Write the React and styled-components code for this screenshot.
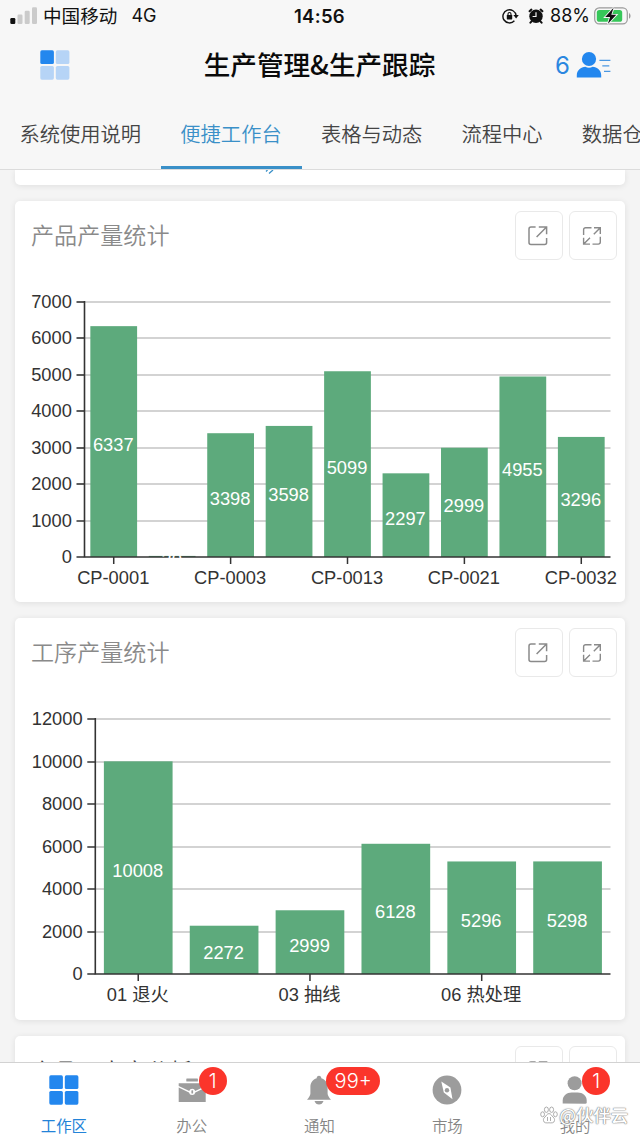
import styled, { createGlobalStyle } from "styled-components";

const GlobalStyle = createGlobalStyle`
    * {
        box-sizing: border-box;
    }
    body {
        margin: 0;
        background: #f4f4f4;
        font-family: "Inter", "Noto Sans CJK SC", sans-serif;
    }
`;

// ===== Layout =====
const Screen = styled.div`
    width: 640px;
    height: 1138px;
    display: flex;
    flex-direction: column;
    overflow: hidden;
    position: relative;
    background: #f4f4f4;
`;

const StatusBar = styled.div`
    height: 32px;
    flex: none;
    display: grid;
    grid-template-columns: 1fr auto 1fr;
    align-items: center;
    padding: 0 8px 0 10px;
    background: #f7f7f7;
    color: #111;
    font-size: 18px;
    line-height: 32px;
`;

const StatusLeft = styled.div`
    display: flex;
    align-items: center;
    font-family: "Inter", "Noto Sans CJK SC", sans-serif;
`;

const Carrier = styled.span`
    margin: 0 14px 0 6px;
    font-size: 18.6px;
`;

const Clock = styled.div`
    margin-right: 3px;
    font-weight: 600;
    font-size: 18.5px;
    letter-spacing: 0.3px;
`;

const StatusRight = styled.div`
    display: flex;
    align-items: center;
    justify-content: flex-end;
`;

const BatteryLevel = styled.span`
    margin: 0 4px 0 6px;
`;

const Header = styled.header`
    height: 66px;
    flex: none;
    display: grid;
    grid-template-columns: 1fr auto 1fr;
    align-items: center;
    padding: 0 29px 0 40px;
    background: #f7f7f7;
`;

const Title = styled.h1`
    margin: -2px 12px 0 0;
    font-family: "Noto Sans CJK SC", sans-serif;
    font-size: 26.6px;
    font-weight: 500;
    line-height: 64px;
    color: #0a0a0a;
    white-space: nowrap;
`;

const Members = styled.div`
    display: flex;
    align-items: center;
    justify-content: flex-end;
    gap: 6px;
    color: #2b87e0;
    font-size: 24px;
`;

const Tabs = styled.nav`
    height: 72px;
    flex: none;
    display: flex;
    background: #f7f7f7;
    border-bottom: 1px solid #dcdcdc;
`;

const Tab = styled.div`
    flex: none;
    height: 71px;
    padding: 0 19.8px 0 19.4px;
    font-family: "Noto Sans CJK SC", sans-serif;
    font-size: 20.3px;
    font-weight: 350;
    line-height: 71px;
    color: ${(p) => (p.$active ? "#3a90c8" : "#444")};
    border-bottom: 3px solid ${(p) => (p.$active ? "#3a90c8" : "transparent")};
`;

const Content = styled.main`
    flex: 1;
    min-height: 0;
    overflow: hidden;
    display: flex;
    flex-direction: column;
    gap: 16px;
    padding: 0 15.5px 0 15px;
`;

const Card = styled.section`
    flex: none;
    height: ${(p) => p.$height}px;
    background: #fff;
    border-radius: ${(p) => (p.$cut ? "0 0 5px 5px" : "5px")};
    box-shadow: 0 1px 6px rgba(0, 0, 0, 0.09);
    overflow: hidden;
`;

const CutMark = styled.svg`
    display: block;
    margin-left: 250px;
`;

const CardHeader = styled.div`
    height: 80px;
    display: flex;
    align-items: flex-start;
    gap: 6px;
    padding: 10px 8px 0 16px;
`;

const CardTitle = styled.h2`
    flex: 1;
    margin: 0;
    font-family: "Noto Sans CJK SC", sans-serif;
    font-size: 23.1px;
    font-weight: 350;
    line-height: ${(p) => (p.$dark ? 49 : 47)}px;
    color: ${(p) => (p.$dark ? "#444" : "#8a8a8a")};
`;

const ToolButton = styled.button`
    width: 48px;
    height: 49px;
    padding: 0 2px 0 0;
    display: grid;
    place-items: center;
    background: #fff;
    border: 1.5px solid #e9e9e9;
    border-radius: 6px;
`;

const Chart = styled.svg`
    display: block;
    font-family: "Liberation Sans", "Noto Sans CJK SC", sans-serif;
    font-size: 18.3px;
`;

const BottomNav = styled.nav`
    height: 76px;
    flex: none;
    display: grid;
    grid-template-columns: repeat(5, 127.8px);
    background: #fff;
    border-top: 1px solid #d2d2d2;
`;

const NavItem = styled.div`
    position: relative;
    display: flex;
    flex-direction: column;
    align-items: center;
    padding-top: 12px;
    color: ${(p) => (p.$active ? "#2383d8" : "#858585")};
    font-family: "Noto Sans CJK SC", sans-serif;
    font-size: 15.4px;
    font-weight: ${(p) => (p.$active ? 400 : 350)};
    line-height: 22px;

    svg {
        display: block;
        margin-bottom: 9px;
    }
`;

const Badge = styled.span`
    position: absolute;
    top: 4px;
    left: ${(p) => p.$left}px;
    min-width: 28px;
    height: 28px;
    padding: 0 8.5px;
    border-radius: 14px;
    background: #fb352b;
    color: #fff;
    font-family: "Inter", sans-serif;
    font-size: 20px;
    font-weight: 300;
    line-height: 28px;
    text-align: center;
`;

const Watermark = styled.div`
    position: absolute;
    right: 12px;
    bottom: 11px;
    display: flex;
    align-items: center;
    gap: 1px;
    color: #fff;
    font-family: "Noto Sans CJK SC", sans-serif;
    font-size: 17.3px;
    font-weight: 500;
    line-height: 24px;
    text-shadow: 0 0 1px #777, 0 0 1px #888, 0 0 2px #aaa;

    svg {
        margin-left: -1px;
    }
`;

// ===== Icons =====
const GridIcon = ({ size = 30, faded }) => (
    <svg width={size} height={size} viewBox="0 0 30 30" fill="#2387ee">
        <rect x="0.3" y="0.3" width="13.6" height="13.8" rx="1.6" />
        <g fill={faded ? "#b6d4f6" : "#2387ee"}>
            <rect x="15.8" y="0.3" width="13.6" height="13.8" rx="1.6" />
            <rect x="0.3" y="15.9" width="13.6" height="13.8" rx="1.6" />
            <rect x="15.8" y="15.9" width="13.6" height="13.8" rx="1.6" />
        </g>
    </svg>
);

const SignalIcon = () => (
    <svg width="27" height="18" viewBox="0 0 27 18" fill="#cbcbcb">
        <rect x="0.3" y="11" width="5" height="6" rx="1.2" fill="#111" />
        <rect x="7.5" y="7.5" width="5" height="9.5" rx="1.2" />
        <rect x="14.7" y="3.8" width="5" height="13.2" rx="1.2" />
        <rect x="22" y="0.3" width="5" height="16.7" rx="1.2" />
    </svg>
);

const LockIcon = () => (
    <svg width="17" height="16" viewBox="0 0 17 16">
        <path d="M12.4 12.8A6.6 6.6 0 1 1 14.1 7.6" fill="none" stroke="#111" strokeWidth="1.4" />
        <path d="M11.4 7h5.4l-2.7 3.5z" fill="#111" />
        <rect x="4.8" y="7" width="5.4" height="4.4" rx="0.6" fill="#111" />
        <path d="M6 7.2V6a1.5 1.5 0 0 1 3 0v1.2" fill="none" stroke="#111" strokeWidth="1.1" />
    </svg>
);

const AlarmIcon = styled(({ className }) => (
    <svg className={className} width="16" height="16" viewBox="0 0 16 16" fill="#111">
        <circle cx="8" cy="8.2" r="6.7" />
        <path
            d="M1.6 3.3 3.4 1.6M14.4 3.3 12.6 1.6M3.6 13.3 2.4 14.7M12.4 13.3 13.6 14.7"
            stroke="#111"
            strokeWidth="2"
            strokeLinecap="round"
        />
        <path d="M8 4.2v4.3H4.6" fill="none" stroke="#f7f7f7" strokeWidth="1.2" />
    </svg>
))`
    margin-left: 9px;
`;

const BatteryIcon = () => (
    <svg width="38" height="18" viewBox="0 0 38 18">
        <rect x="0.7" y="0.9" width="32.6" height="16" rx="4.6" fill="none" stroke="#9a9a9a" strokeWidth="1.2" />
        <rect x="2.8" y="3" width="25.4" height="11.8" rx="2.6" fill="#36c759" />
        <path d="M35 6v5.8c2-.9 2-4.9 0-5.8z" fill="#9a9a9a" />
        <path
            d="M19.6.8 11.2 10h4.9L13.8 17l8.5-9.2h-5z"
            fill="#111"
            stroke="#f7f7f7"
            strokeWidth="1.8"
            paintOrder="stroke"
        />
    </svg>
);

const MemberIcon = () => (
    <svg width="35" height="28" viewBox="0 0 35 28">
        <circle cx="13" cy="8" r="7.1" fill="#2387ee" />
        <path d="M0.8 26.4v-2.2c0-4.7 4.2-8.4 8.6-8.4 2 1.4 5.2 1.4 7.2 0 4.5 0 8.6 3.7 8.6 8.4v2.2z" fill="#2387ee" />
        <path d="M23.4 9.3h11M26.3 14.8h7M28 20.3h6.4" stroke="#4b98e2" strokeWidth="1.3" />
    </svg>
);

const OpenIcon = () => (
    <svg width="22" height="22" viewBox="0 0 22 22" fill="none" stroke="#8a8a8a" strokeWidth="1.5">
        <path d="M8.6 2H4a2 2 0 0 0-2 2v13.6a2 2 0 0 0 2 2h13.6a2 2 0 0 0 2-2V13M11.8 2h7.8v7.2M19.3 2.3 9.6 12" />
    </svg>
);

const ExpandIcon = () => (
    <svg width="20" height="20" viewBox="0 0 20 20" fill="none" stroke="#8a8a8a" strokeWidth="1.4">
        <path d="M9.5 1.7H3.6a2 2 0 0 0-2 2V9M12 1.7h6.3V8M18 2l-6.2 6.2M18.3 10.8v5.3a2 2 0 0 1-2 2h-5.8M8 18.1H1.6v-6.3M2 17.8l6-6" />
    </svg>
);

const BriefcaseIcon = () => (
    <svg width="30" height="30" viewBox="0 0 30 30" fill="#9c9c9c">
        <rect x="9.3" y="3.4" width="11.6" height="3" rx="0.5" />
        <path d="M1.7 8.3h27v2.6l-10.5 5a3.2 3.2 0 0 0-6 0L1.7 10.9z" />
        <path d="M1.7 12.6 12 17.4a3.2 3.2 0 0 0 6.3 0l10.4-4.8V27h-27z" />
        <rect x="14.4" y="15.2" width="1.7" height="3.4" rx="0.6" />
    </svg>
);

const BellIcon = () => (
    <svg width="30" height="30" viewBox="0 0 30 30" fill="#9c9c9c">
        <path d="M15 0.8c1.5 0 2.3 1 2.3 2.4 4 1.1 6.3 4.6 6.3 8.8v6.4c0 2.2 1.6 4 3.4 6.4H3c1.8-2.4 3.4-4.2 3.4-6.4V12c0-4.2 2.3-7.7 6.3-8.8C12.7 1.8 13.5.8 15 .8z" />
        <path d="M10.5 26h9c-.8 2.4-2.4 3.6-4.5 3.6s-3.7-1.2-4.5-3.6z" />
    </svg>
);

const CompassIcon = () => (
    <svg width="30" height="30" viewBox="0 0 30 30">
        <circle cx="15" cy="15" r="14.4" fill="#9c9c9c" />
        <path d="M9.3 6.5 18.4 12.6 20.5 24.3 11.8 17.5z" fill="#fff" />
        <circle cx="15" cy="15.2" r="2.2" fill="#9c9c9c" />
    </svg>
);

const MineIcon = () => (
    <svg width="30" height="30" viewBox="0 0 30 30" fill="#9c9c9c">
        <circle cx="14.6" cy="8.3" r="7" />
        <path d="M2.7 28.5v-3c0-4.7 4-8 9-8h6c5 0 9 3.3 9 8v1.8a1.5 1.5 0 0 1-1.5 1.5z" />
    </svg>
);

const PawIcon = () => (
    <svg width="18" height="18" viewBox="0 0 18 18" fill="#fff" stroke="#999" strokeWidth="0.8">
        <ellipse cx="6.4" cy="3.7" rx="2" ry="2.7" />
        <ellipse cx="11.6" cy="3.7" rx="2" ry="2.7" />
        <ellipse cx="2.6" cy="8.3" rx="1.9" ry="2.5" />
        <ellipse cx="15.4" cy="8.3" rx="1.9" ry="2.5" />
        <path d="M9 7.6c2 0 2.5 2 4 3.4s1.7 2 1.5 3.6c-.3 2.6-3 2.4-5.5 2.2-2.5.2-5.2.4-5.5-2.2-.2-1.600 0-2.200 1.500-3.600S7 7.600 9 7.600z" />
        <path d="M7.5 11v4M10.5 11v4" />
    </svg>
);

// ===== Charts =====
const TOP = 21;
const BOTTOM = 276;
const RIGHT = 595.5;

function BarChart({ data, max, step, left }) {
    const slot = (RIGHT - left) / data.length;
    const y = (v) => BOTTOM - (v / max) * (BOTTOM - TOP);
    const ticks = [];
    for (let v = 0; v <= max; v += step) ticks.push(v);

    return (
        <Chart width="609" height="321" viewBox="0 0 609 321">
            {ticks.map((v) => {
                const ty = Math.round(y(v));
                return (
                    <g key={v}>
                        {v > 0 && (
                            <line x1={left} x2={RIGHT} y1={ty} y2={ty} stroke="#c4c4c4" strokeWidth="1.5" />
                        )}
                        <line x1={left - 8} x2={left} y1={ty} y2={ty} stroke="#333" strokeWidth="1.6" />
                        <text x={left - 12.7} y={ty + 6.3} textAnchor="end" fill="#333">
                            {v}
                        </text>
                    </g>
                );
            })}
            {data.map((d, i) => (
                <rect
                    key={i}
                    x={left + slot * (i + 0.1)}
                    y={y(d.value)}
                    width={slot * 0.8}
                    height={BOTTOM - y(d.value)}
                    fill="#5daa7c"
                />
            ))}
            <line x1={left} x2={left} y1={TOP - 1} y2={BOTTOM + 0.5} stroke="#333" strokeWidth="1.6" />
            <line x1={left} x2={RIGHT} y1={BOTTOM} y2={BOTTOM} stroke="#333" strokeWidth="1.6" />
            {data.map((d, i) => {
                const cx = left + slot * (i + 0.5);
                return (
                    <g key={i} textAnchor="middle">
                        {d.label && (
                            <>
                                <line x1={cx} x2={cx} y1={BOTTOM} y2={BOTTOM + 7} stroke="#333" strokeWidth="1.5" />
                                <text x={cx - 0.5} y={BOTTOM + 27.4} fill="#333">
                                    {d.label}
                                </text>
                            </>
                        )}
                        <text x={cx - 0.5} y={(y(d.value) + BOTTOM) / 2 + 9.4} fill="#fff">
                            {d.value}
                        </text>
                    </g>
                );
            })}
        </Chart>
    );
}

const products = [
    { label: "CP-0001", value: 6337 },
    { value: 30 },
    { label: "CP-0003", value: 3398 },
    { value: 3598 },
    { label: "CP-0013", value: 5099 },
    { value: 2297 },
    { label: "CP-0021", value: 2999 },
    { value: 4955 },
    { label: "CP-0032", value: 3296 },
];

const processes = [
    { label: "01 退火", value: 10008 },
    { value: 2272 },
    { label: "03 抽线", value: 2999 },
    { value: 6128 },
    { label: "06 热处理", value: 5296 },
    { value: 5298 },
];

const tabs = ["系统使用说明", "便捷工作台", "表格与动态", "流程中心", "数据仓库"];

const navItems = [
    { label: "工作区", icon: <GridIcon />, active: true },
    { label: "办公", icon: <BriefcaseIcon />, badge: "1", left: 71 },
    { label: "通知", icon: <BellIcon />, badge: "99+", left: 70.5 },
    { label: "市场", icon: <CompassIcon /> },
    { label: "我的", icon: <MineIcon />, badge: "1", left: 71 },
];

function ChartCard({ title, height, dark, children }) {
    return (
        <Card $height={height}>
            <CardHeader>
                <CardTitle $dark={dark}>{title}</CardTitle>
                <ToolButton>
                    <OpenIcon />
                </ToolButton>
                <ToolButton>
                    <ExpandIcon />
                </ToolButton>
            </CardHeader>
            {children}
        </Card>
    );
}

function App() {
    return (
        <Screen>
            <GlobalStyle />
            <StatusBar>
                <StatusLeft>
                    <SignalIcon />
                    <Carrier>中国移动</Carrier>
                    4G
                </StatusLeft>
                <Clock>14:56</Clock>
                <StatusRight>
                    <LockIcon />
                    <AlarmIcon />
                    <BatteryLevel>88%</BatteryLevel>
                    <BatteryIcon />
                </StatusRight>
            </StatusBar>

            <Header>
                <GridIcon faded />
                <Title>生产管理&amp;生产跟踪</Title>
                <Members>
                    6
                    <MemberIcon />
                </Members>
            </Header>

            <Tabs>
                {tabs.map((t, i) => (
                    <Tab key={t} $active={i === 1}>
                        {t}
                    </Tab>
                ))}
            </Tabs>

            <Content>
                <Card $height={15} $cut>
                    <CutMark width="10" height="4" viewBox="0 0 10 4">
                        <path d="M1 1.5 2.5 0M4 3.5 8 0" stroke="#3a90c8" strokeWidth="1.3" />
                    </CutMark>
                </Card>
                <ChartCard title="产品产量统计" height={401}>
                    <BarChart data={products} max={7000} step={1000} left={69.5} />
                </ChartCard>
                <ChartCard title="工序产量统计" height={402}>
                    <BarChart data={processes} max={12000} step={2000} left={80.3} />
                </ChartCard>
                <ChartCard title="产品不良率分析" height={402} dark />
            </Content>

            <BottomNav>
                {navItems.map((n) => (
                    <NavItem key={n.label} $active={n.active}>
                        {n.icon}
                        {n.label}
                        {n.badge && <Badge $left={n.left}>{n.badge}</Badge>}
                    </NavItem>
                ))}
            </BottomNav>

            <Watermark>
                <PawIcon />
                @伙伴云
            </Watermark>
        </Screen>
    );
}

export default App;
